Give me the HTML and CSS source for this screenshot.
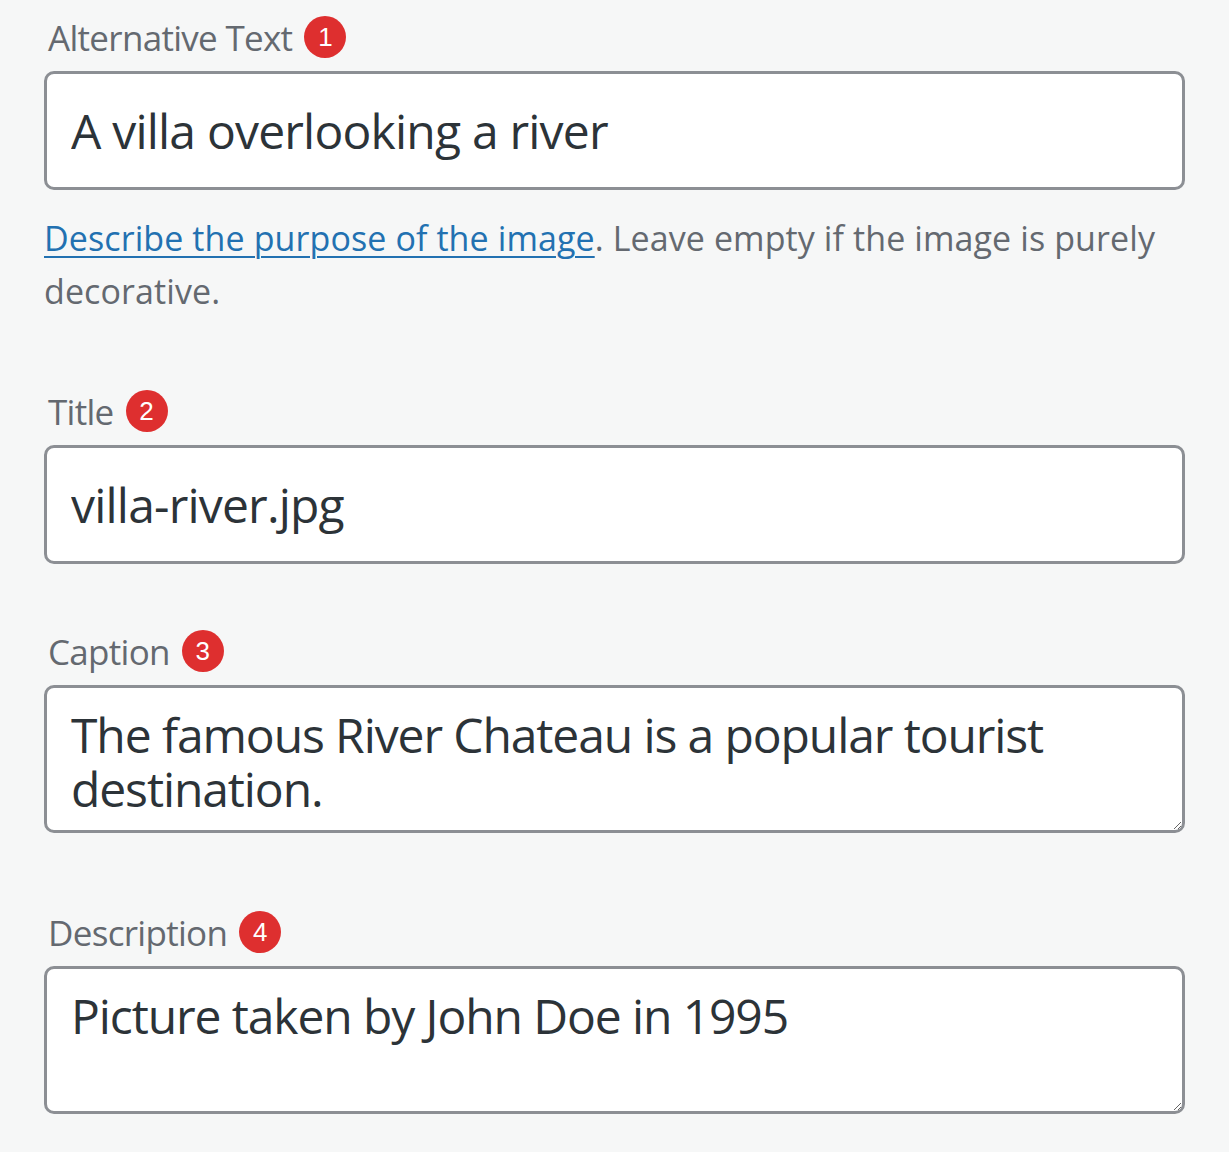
FILE: index.html
```html
<!DOCTYPE html>
<html lang="en">
<head>
<meta charset="utf-8">
<title>Attachment details</title>
<link rel="stylesheet" href="styles.css">
</head>
<body>
<div class="panel">
  <div class="field field-alt">
    <label class="label" for="alt">Alternative Text <span class="badge">1</span></label>
    <input id="alt" class="input" type="text" value="A villa overlooking a river">
    <p class="help"><a href="#">Describe the purpose of the image</a>. Leave empty if the image is purely decorative.</p>
  </div>
  <div class="field field-title">
    <label class="label" for="title">Title <span class="badge">2</span></label>
    <input id="title" class="input" type="text" value="villa-river.jpg">
  </div>
  <div class="field field-caption">
    <label class="label" for="caption">Caption <span class="badge">3</span></label>
    <textarea id="caption" class="input area">The famous River Chateau is a popular tourist destination.</textarea>
  </div>
  <div class="field field-desc">
    <label class="label" for="desc">Description <span class="badge">4</span></label>
    <textarea id="desc" class="input area">Picture taken by John Doe in 1995</textarea>
  </div>
</div>
</body>
</html>
```
FILE: styles.css
```css
html, body {
  margin: 0;
  padding: 0;
  background: #f6f7f7;
}
body {
  font-family: "Open Sans", "Noto Sans", sans-serif;
  color: #2c3338;
}
.panel {
  width: 1141px;
  margin-left: 44px;
  padding-top: 12px;
}
.field {
  display: flex;
  flex-direction: column;
}
.label {
  display: flex;
  align-items: center;
  gap: 12px;
  padding-left: 4px;
  font-size: 35px;
  line-height: 52px;
  color: #646970;
  letter-spacing: -0.7px;
  margin-bottom: 7px;
}
.badge {
  display: inline-flex;
  align-items: center;
  justify-content: center;
  width: 42px;
  height: 42px;
  border-radius: 50%;
  background: #de2f2f;
  color: #ffffff;
  font-family: "Liberation Sans", Arial, sans-serif;
  font-size: 26px;
  letter-spacing: 0;
  margin-top: -2px;
}
.input {
  box-sizing: border-box;
  width: 100%;
  height: 119px;
  margin: 0;
  padding: 0 24px;
  border: 3px solid #8c8f94;
  border-radius: 10px;
  background: #ffffff;
  font-family: "Open Sans", "Noto Sans", sans-serif;
  font-size: 48px;
  letter-spacing: -0.8px;
  color: #2c3338;
  outline: none;
}
.area {
  height: 148px;
  padding-top: 20px;
  line-height: 54px;
  letter-spacing: -1.1px;
  resize: vertical;
  overflow: hidden;
}
.help {
  margin: 22px 0 0 0;
  font-size: 34px;
  line-height: 53px;
  color: #646970;
  letter-spacing: 0.1px;
}
.help a {
  color: #2271b1;
  text-decoration: underline;
  text-underline-offset: 5px;
  text-decoration-thickness: 2px;
}
.field-title {
  margin-top: 68px;
}
.field-caption {
  margin-top: 62px;
}
.field-desc {
  margin-top: 74px;
}
```
